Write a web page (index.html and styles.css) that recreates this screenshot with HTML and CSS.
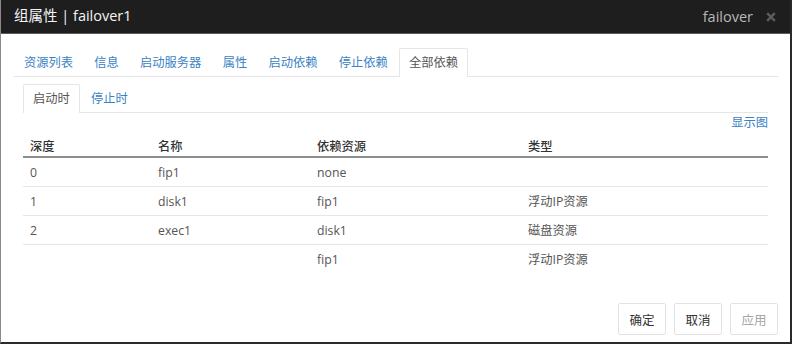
FILE: index.html
```html
<!DOCTYPE html>
<html lang="zh-CN">
<head>
<meta charset="utf-8">
<title>组属性</title>
<link rel="stylesheet" href="styles.css">
</head>
<body>
<div class="dialog">
  <div class="titlebar">
    <span class="title">组属性 | failover1</span>
    <span class="title-right"><span class="tname">failover</span><svg class="close" width="10" height="10" viewBox="0 0 10 10"><path d="M1.2 1.2 L8.8 8.8 M8.8 1.2 L1.2 8.8" stroke="#5c5c5c" stroke-width="2.4" stroke-linecap="butt"/></svg></span>
  </div>
  <div class="body">
    <ul class="tabs">
      <li><a>资源列表</a></li>
      <li><a>信息</a></li>
      <li><a>启动服务器</a></li>
      <li><a>属性</a></li>
      <li><a>启动依赖</a></li>
      <li><a>停止依赖</a></li>
      <li class="active"><a>全部依赖</a></li>
    </ul>
    <div class="pane">
      <ul class="tabs subtabs">
        <li class="active"><a>启动时</a></li>
        <li><a>停止时</a></li>
      </ul>
      <div class="link-row"><a class="link">显示图</a></div>
      <table class="grid">
        <colgroup>
          <col class="c1"><col class="c2"><col class="c3"><col class="c4">
        </colgroup>
        <thead>
          <tr><th>深度</th><th>名称</th><th>依赖资源</th><th>类型</th></tr>
        </thead>
        <tbody>
          <tr><td>0</td><td>fip1</td><td>none</td><td></td></tr>
          <tr><td>1</td><td>disk1</td><td>fip1</td><td>浮动IP资源</td></tr>
          <tr><td>2</td><td>exec1</td><td>disk1</td><td>磁盘资源</td></tr>
          <tr><td></td><td></td><td>fip1</td><td>浮动IP资源</td></tr>
        </tbody>
      </table>
    </div>
    <div class="footer">
      <button class="btn">确定</button>
      <button class="btn">取消</button>
      <button class="btn disabled">应用</button>
    </div>
  </div>
</div>
</body>
</html>
```
FILE: styles.css
```css
html, body {
  margin: 0;
  padding: 0;
  background: #fff;
}
body {
  font-family: "Open Sans", "Noto Sans CJK SC", sans-serif;
  width: 792px;
  height: 344px;
  overflow: hidden;
}
.dialog {
  width: 792px;
  height: 344px;
  box-sizing: border-box;
  border-left: 1px solid #8a8a8a;
  border-right: 2px solid #2a2a2a;
  border-bottom: 2px solid #2a2a2a;
  display: flex;
  flex-direction: column;
}
.titlebar {
  height: 33px;
  background: #1e1e1e;
  border-bottom: 1px solid #5a5a5a;
  display: flex;
  align-items: center;
  justify-content: space-between;
  padding: 0 14px 0 13px;
  flex-shrink: 0;
}
.title {
  color: #f4f4f4;
  font-size: 14.5px;
  line-height: 1;
}
.title-right {
  display: flex;
  align-items: center;
}
.tname {
  color: #b8b8b8;
  font-size: 14.5px;
}
.close {
  display: block;
  margin-left: 13px;
}
.body {
  flex: 1;
  display: flex;
  flex-direction: column;
  padding: 14px 12px 0 13px;
}
.tabs {
  list-style: none;
  margin: 0;
  padding: 0;
  display: flex;
  border-bottom: 1px solid #e6e6e6;
  font-size: 12.25px;
}
.tabs li {
  margin-right: 1.3px;
  margin-bottom: -1px;
}
.tabs a {
  display: block;
  height: 27px;
  line-height: 27px;
  padding: 0 9px;
  color: #3a82c4;
  border: 1px solid transparent;
  border-bottom: none;
  border-radius: 2px 2px 0 0;
}
.tabs li.active a {
  color: #555;
  background: #fff;
  border-color: #e6e6e6;
  height: 28px;
}
.pane {
  padding: 7px 10px 0 9px;
}
.subtabs li:first-child a {
  padding: 0 9px;
}
.link-row {
  display: flex;
  justify-content: flex-end;
  padding-top: 2px;
  font-size: 12.25px;
  line-height: 16px;
}
.link {
  color: #3a82c4;
}
.grid {
  width: 100%;
  border-collapse: collapse;
  font-size: 12.25px;
  margin-top: 0;
}
.c1 { width: 128px; }
.c2 { width: 159px; }
.c3 { width: 211px; }
.grid th {
  text-align: left;
  font-weight: 500;
  color: #333;
  padding: 8px 7px 1px;
  line-height: 16px;
  border-bottom: 2px solid #8e8e8e;
}
.grid td {
  color: #555;
  padding: 0 7px;
  height: 28px;
  border-top: 1px solid #e6e6e6;
}
.grid tbody tr:first-child td {
  border-top: none;
}
.footer {
  margin-top: auto;
  display: flex;
  justify-content: flex-end;
  gap: 8px;
  padding: 0 0 7px;
}
.btn {
  font-family: inherit;
  font-size: 12.5px;
  width: 48px;
  height: 32px;
  background: #fff;
  border: 1px solid #e2e2e2;
  border-radius: 2px;
  color: #333;
  padding: 0;
}
.btn.disabled {
  color: #a5a5a5;
}
```
